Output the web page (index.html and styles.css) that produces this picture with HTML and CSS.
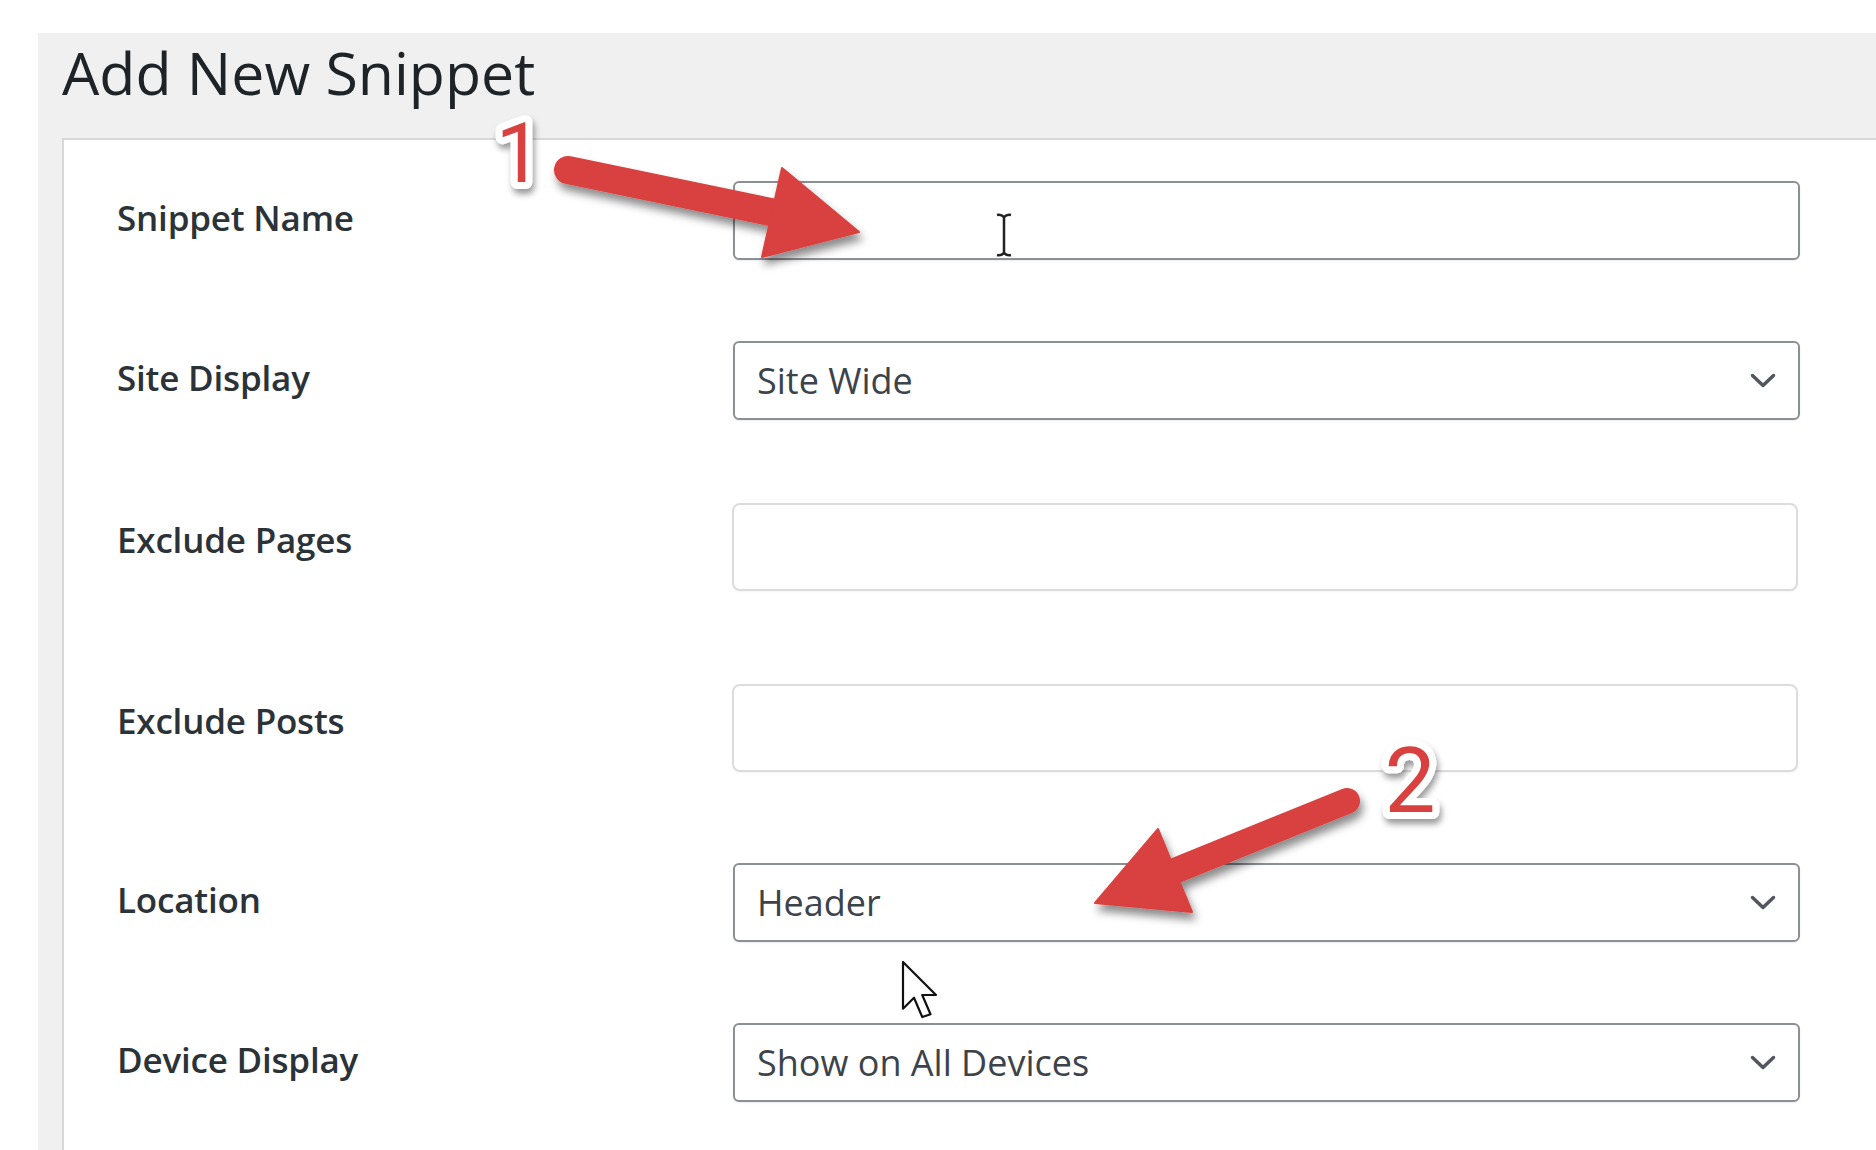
FILE: index.html
```html
<!DOCTYPE html>
<html lang="en">
<head>
<meta charset="utf-8">
<title>Add New Snippet</title>
<link rel="stylesheet" href="styles.css">
</head>
<body>
<div class="wrap">
  <h1 class="title">Add New Snippet</h1>
  <div class="card">
    <div class="row">
      <div class="label">Snippet Name</div>
      <div class="control"></div>
    </div>
    <div class="row">
      <div class="label">Site Display</div>
      <div class="control"><span>Site Wide</span><svg class="chev" viewBox="0 0 26 15"><polyline points="2.5,2.5 13,12.5 23.5,2.5"/></svg></div>
    </div>
    <div class="row row--tall">
      <div class="label">Exclude Pages</div>
      <div class="control control--soft"></div>
    </div>
    <div class="row row--tall">
      <div class="label">Exclude Posts</div>
      <div class="control control--soft"></div>
    </div>
    <div class="row">
      <div class="label">Location</div>
      <div class="control"><span>Header</span><svg class="chev" viewBox="0 0 26 15"><polyline points="2.5,2.5 13,12.5 23.5,2.5"/></svg></div>
    </div>
    <div class="row">
      <div class="label">Device Display</div>
      <div class="control"><span>Show on All Devices</span><svg class="chev" viewBox="0 0 26 15"><polyline points="2.5,2.5 13,12.5 23.5,2.5"/></svg></div>
    </div>
  </div>
</div>
<svg class="overlay" width="1876" height="1150" viewBox="0 0 1876 1150">
  <defs>
    <filter id="sh" x="-30%" y="-30%" width="170%" height="190%">
      <feDropShadow dx="3" dy="7" stdDeviation="4.5" flood-color="#000" flood-opacity="0.45"/>
    </filter>
    <filter id="shn" x="-40%" y="-30%" width="190%" height="170%">
      <feDropShadow dx="2" dy="5" stdDeviation="3" flood-color="#000" flood-opacity="0.4"/>
    </filter>
  </defs>
  <g class="arrow" filter="url(#sh)">
    <line x1="568" y1="170" x2="785" y2="215"/>
    <polygon points="782,168 859,232 762,257"/>
  </g>
  <g class="arrow" filter="url(#sh)">
    <line x1="1347" y1="801" x2="1172" y2="872"/>
    <polygon points="1158,829 1095,903 1192,912"/>
  </g>
  <text class="num" x="519" y="182" filter="url(#shn)">1</text>
  <text class="num num--big" x="1410" y="812" filter="url(#shn)">2</text>
  <path class="ibeam" d="M997 215 q4 -1 7 2 q3 -3 7 -2 M1004 217 V253 M997 255 q4 1 7 -2 q3 3 7 2"/>
  <path class="pointer" d="M0 0 L0 17 L4 13 L7 20 L10 19 L7 12 L12 12 Z" transform="translate(903 962) scale(2.75)"/>
</svg>
</body>
</html>
```
FILE: styles.css
```css
html, body {
  margin: 0;
  padding: 0;
}

body {
  background: #ffffff;
  width: 1876px;
  height: 1150px;
  overflow: hidden;
  position: relative;
  font-family: "Open Sans", "Noto Sans", "DejaVu Sans", sans-serif;
}

.wrap {
  margin: 33px 0 0 38px;
  padding-left: 24px;
  background: #f0f0f1;
  height: 1117px;
  display: flex;
  flex-direction: column;
  overflow: hidden;
}

.title {
  flex: none;
  margin: 0 0 27px;
  font-size: 59px;
  font-weight: 400;
  line-height: 78px;
  color: #1d2327;
}

.card {
  flex: 1;
  min-height: 0;
  overflow: hidden;
  background: #ffffff;
  border-top: 2px solid #d8d8da;
  border-left: 2px solid #d8d8da;
  padding-left: 53px;
}

.row {
  display: flex;
  align-items: flex-start;
  padding: 41px 0 40px;
}

.row--tall {
  padding: 43px 0 50px;
}

.label {
  flex: none;
  width: 616px;
  line-height: 74px;
  font-size: 35px;
  font-weight: 600;
  color: #2c3338;
  letter-spacing: -0.2px;
}

.control {
  flex: none;
  box-sizing: border-box;
  width: 1067px;
  height: 79px;
  border: 2px solid #8c8f94;
  border-radius: 6px;
  background: #ffffff;
  display: flex;
  align-items: center;
  justify-content: space-between;
  padding: 0 22px 0 22px;
  font-size: 36px;
  color: #3c434a;
  box-shadow: 0 1px 2px rgba(0, 0, 0, 0.08);
}

.control--soft {
  width: 1066px;
  margin-left: -1px;
  height: 88px;
  border-color: #dcdcde;
  border-radius: 8px;
  box-shadow: 0 1px 2px rgba(0, 0, 0, 0.04);
}

.chev {
  width: 26px;
  height: 15px;
}

.chev polyline {
  fill: none;
  stroke: #50575e;
  stroke-width: 3.5;
  stroke-linecap: round;
  stroke-linejoin: round;
}

.overlay {
  position: absolute;
  left: 0;
  top: 0;
  pointer-events: none;
}

.arrow line {
  stroke: #d9403f;
  stroke-width: 28;
  stroke-linecap: round;
}

.arrow polygon {
  fill: #d9403f;
  stroke: #d9403f;
  stroke-width: 2;
  stroke-linejoin: round;
}

.arrow + .arrow line {
  stroke-width: 26;
}

.num {
  font-family: "Roboto", "Open Sans", sans-serif;
  font-weight: 400;
  font-size: 83px;
  text-anchor: middle;
  fill: #d9403f;
  stroke: #ffffff;
  stroke-width: 14;
  stroke-linejoin: round;
  paint-order: stroke fill;
}

.num--big {
  font-size: 91px;
}

.ibeam {
  fill: none;
  stroke: #222222;
  stroke-width: 2.5;
}

.pointer {
  fill: #ffffff;
  stroke: #111111;
  stroke-width: 0.8;
  stroke-linejoin: round;
}
```
